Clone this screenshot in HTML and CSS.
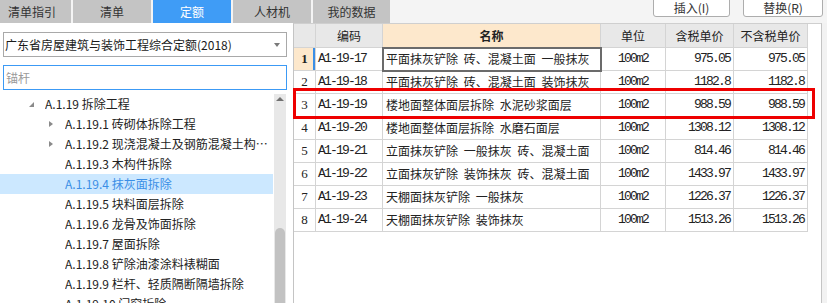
FILE: index.html
```html
<!DOCTYPE html>
<html>

<head>
  <meta charset="utf-8">
  <link rel="stylesheet" href="styles.css">
</head>

<body>

  <div class="topbar">
    <div class="tabs">
      <div class="tab">清单指引</div>
      <div class="tab">清单</div>
      <div class="tab active">定额</div>
      <div class="tab">人材机</div>
      <div class="tab">我的数据</div>
    </div>
    <div class="actions">
      <button class="btn btn-insert">插入(I)</button>
      <button class="btn btn-replace">替换(R)</button>
    </div>
  </div>

  <div class="main">

    <div class="side">
      <div class="select">
        <span>广东省房屋建筑与装饰工程综合定额(2018)</span>
        <span class="caret"></span>
      </div>
      <input class="search" type="text" placeholder="锚杆">

      <div class="tree-wrap">
        <ul class="tree">
          <li class="node lvl0"><span class="arrow open"></span><span class="label">A.1.19 拆除工程</span></li>
          <li class="node lvl1"><span class="arrow closed"></span><span class="label">A.1.19.1 砖砌体拆除工程</span></li>
          <li class="node lvl1"><span class="arrow closed"></span><span class="label">A.1.19.2 现浇混凝土及钢筋混凝土构件拆除</span></li>
          <li class="node lvl1"><span class="arrow"></span><span class="label">A.1.19.3 木构件拆除</span></li>
          <li class="node lvl1 current"><span class="arrow"></span><span class="label">A.1.19.4 抹灰面拆除</span></li>
          <li class="node lvl1"><span class="arrow"></span><span class="label">A.1.19.5 块料面层拆除</span></li>
          <li class="node lvl1"><span class="arrow"></span><span class="label">A.1.19.6 龙骨及饰面拆除</span></li>
          <li class="node lvl1"><span class="arrow"></span><span class="label">A.1.19.7 屋面拆除</span></li>
          <li class="node lvl1"><span class="arrow"></span><span class="label">A.1.19.8 铲除油漆涂料裱糊面</span></li>
          <li class="node lvl1"><span class="arrow"></span><span class="label">A.1.19.9 栏杆、轻质隔断隔墙拆除</span></li>
          <li class="node lvl1"><span class="arrow"></span><span class="label">A.1.19.10 门窗拆除</span></li>
        </ul>
        <div class="scrollbar">
          <div class="scroll-up"></div>
          <div class="thumb"></div>
        </div>
      </div>
    </div>

    <div class="grid-panel">
      <table class="grid">
        <colgroup>
          <col class="c-no">
          <col class="c-code">
          <col class="c-name">
          <col class="c-unit">
          <col class="c-price">
          <col class="c-price2">
        </colgroup>
        <thead>
          <tr>
            <th class="no"></th>
            <th>编码</th>
            <th class="name-head">名称</th>
            <th>单位</th>
            <th>含税单价</th>
            <th>不含税单价</th>
          </tr>
        </thead>
        <tbody>
          <tr class="active-row">
            <td class="no">1</td>
            <td class="code">A1-19-17</td>
            <td class="name selected">平面抹灰铲除 砖、混凝土面 一般抹灰</td>
            <td class="unit">100m2</td>
            <td class="num">975.05</td>
            <td class="num">975.05</td>
          </tr>
          <tr>
            <td class="no">2</td>
            <td class="code">A1-19-18</td>
            <td class="name">平面抹灰铲除 砖、混凝土面 装饰抹灰</td>
            <td class="unit">100m2</td>
            <td class="num">1182.8</td>
            <td class="num">1182.8</td>
          </tr>
          <tr>
            <td class="no">3</td>
            <td class="code">A1-19-19</td>
            <td class="name">楼地面整体面层拆除 水泥砂浆面层</td>
            <td class="unit">100m2</td>
            <td class="num">988.59</td>
            <td class="num">988.59</td>
          </tr>
          <tr>
            <td class="no">4</td>
            <td class="code">A1-19-20</td>
            <td class="name">楼地面整体面层拆除 水磨石面层</td>
            <td class="unit">100m2</td>
            <td class="num">1308.12</td>
            <td class="num">1308.12</td>
          </tr>
          <tr>
            <td class="no">5</td>
            <td class="code">A1-19-21</td>
            <td class="name">立面抹灰铲除 一般抹灰 砖、混凝土面</td>
            <td class="unit">100m2</td>
            <td class="num">814.46</td>
            <td class="num">814.46</td>
          </tr>
          <tr>
            <td class="no">6</td>
            <td class="code">A1-19-22</td>
            <td class="name">立面抹灰铲除 装饰抹灰 砖、混凝土面</td>
            <td class="unit">100m2</td>
            <td class="num">1433.97</td>
            <td class="num">1433.97</td>
          </tr>
          <tr>
            <td class="no">7</td>
            <td class="code">A1-19-23</td>
            <td class="name">天棚面抹灰铲除 一般抹灰</td>
            <td class="unit">100m2</td>
            <td class="num">1226.37</td>
            <td class="num">1226.37</td>
          </tr>
          <tr>
            <td class="no">8</td>
            <td class="code">A1-19-24</td>
            <td class="name">天棚面抹灰铲除 装饰抹灰</td>
            <td class="unit">100m2</td>
            <td class="num">1513.26</td>
            <td class="num">1513.26</td>
          </tr>
        </tbody>
      </table>

      <!-- red mark drawn over row 3 -->
      <div class="mark"></div>
    </div>

  </div>
</body>

</html>
```

FILE: styles.css
```css
body {
  margin: 0;
  width: 827px;
  height: 303px;
  overflow: hidden;
  background-color: #f2f2f2;
  font-family: "Noto Sans CJK SC", "Noto Sans", sans-serif;
  font-size: 12px;
  color: #222;
}

.topbar {
  height: 23px;
  display: flex;
  background-color: #f4f4f4;
  overflow: visible;
}

.tabs {
  display: flex;
  gap: 2px;
  margin-left: -7px;
  background-color: #f4f4f4;
}

.tab {
  width: 78px;
  height: 23px;
  line-height: 23px;
  text-align: center;
  background-color: #c4c4c4;
  color: #333;
}

.tab.active {
  background-color: #3f9cf6;
  color: #fff;
}

.tabs .tab:last-child {
  width: 77px;
}

.actions {
  display: flex;
  gap: 13px;
  margin-left: auto;
  margin-right: 4px;
}

.btn {
  height: 20px;
  margin-top: -3px;
  padding: 2px 0 0 0;
  border: 1px solid #adadad;
  border-radius: 0 0 3px 3px;
  background-color: #fff;
  font-family: "Noto Sans CJK SC", "Noto Sans", sans-serif;
  font-size: 12px;
  line-height: 16px;
  color: #333;
}

.btn-insert {
  width: 77px;
}

.btn-replace {
  width: 80px;
}

.main {
  display: flex;
  height: 280px;
}

.side {
  width: 293px;
  background-color: #fff;
  display: flex;
  flex-direction: column;
}

.select {
  position: relative;
  width: 284px;
  height: 25px;
  margin: 9px 0 0 3px;
  box-sizing: border-box;
  border: 1px solid #a9a9a9;
  padding-left: 1px;
  line-height: 23px;
  color: #1a1a1a;
}

.caret {
  position: absolute;
  right: 6px;
  top: 10px;
  border-left: 3px solid transparent;
  border-right: 3px solid transparent;
  border-top: 4px solid #7a7a7a;
}

.search {
  width: 284px;
  height: 25px;
  margin: 8px 0 0 3px;
  box-sizing: border-box;
  border: 1px solid #3c9af5;
  padding: 0 0 0 2px;
  outline: none;
  font-family: "Noto Sans CJK SC", "Noto Sans", sans-serif;
  font-size: 12px;
}

.search::placeholder {
  color: #9a9a9a;
}

.tree-wrap {
  display: flex;
  width: 286px;
  margin-top: 4px;
  flex: 1;
  overflow: hidden;
}

.tree {
  list-style: none;
  margin: 0;
  padding: 0;
  width: 274px;
}

.node {
  display: flex;
  align-items: center;
  height: 20px;
  line-height: 20px;
  width: 273px;
  box-sizing: border-box;
  white-space: nowrap;
}

.node.lvl0 {
  padding-left: 29px;
}

.node.lvl1 {
  padding-left: 49px;
}

.node .label {
  overflow: hidden;
  text-overflow: ellipsis;
}

.arrow {
  flex: none;
  width: 16px;
  height: 20px;
  position: relative;
}

.arrow.open::before {
  content: "";
  position: absolute;
  left: 0;
  top: 8px;
  border-right: 5px solid #8a8a8a;
  border-top: 5px solid transparent;
}

.arrow.closed::before {
  content: "";
  position: absolute;
  left: 0;
  top: 7px;
  border-left: 4px solid #8a8a8a;
  border-top: 3px solid transparent;
  border-bottom: 3px solid transparent;
}

.node.current {
  background-color: #cce8ff;
  color: #3a8ee6;
}

.scrollbar {
  position: relative;
  width: 12px;
  background-color: #e8e8e8;
}

.scroll-up {
  position: absolute;
  left: 2px;
  top: 3px;
  border-left: 4px solid transparent;
  border-right: 4px solid transparent;
  border-bottom: 4px solid #707070;
}

.thumb {
  position: absolute;
  left: 1px;
  top: 134px;
  width: 10px;
  height: 120px;
  border-radius: 5px;
  background-color: #c2c2c2;
}

.grid-panel {
  position: relative;
  width: 529px;
  box-sizing: border-box;
  border-top: 1px solid #cfcfcf;
  border-left: 1px solid #c4c4c4;
  border-right: 1px solid #c4c4c4;
  background-color: #fff;
}

.grid {
  table-layout: fixed;
  border-collapse: separate;
  border-spacing: 0;
  width: 514px;
}

.c-no { width: 22px; }
.c-code { width: 67px; }
.c-name { width: 218px; }
.c-unit { width: 65px; }
.c-price { width: 68px; }
.c-price2 { width: 74px; }

.grid th,
.grid td {
  border-right: 1px solid #d4d4d4;
  border-bottom: 1px solid #d4d4d4;
  padding: 0;
  white-space: nowrap;
  overflow: hidden;
}

.grid th {
  height: 23px;
  line-height: 23px;
  background-color: #e8e8e8;
  font-weight: normal;
  color: #222;
}

.grid th.name-head {
  background-color: #fde8cc;
  font-weight: bold;
}

.grid td {
  height: 22px;
  line-height: 22px;
}

.grid .no {
  text-align: center;
  font-family: "Liberation Serif", serif;
  font-size: 13px;
  color: #222;
}

.active-row .no {
  background-color: #fde8cc;
  font-weight: bold;
  box-shadow: inset -2px 0 #3a8ee6;
}

.grid .code {
  padding-left: 2px;
  font-family: "Liberation Mono", monospace;
  font-size: 13px;
  letter-spacing: -1.8px;
}

.grid .name {
  padding-left: 3px;
  word-spacing: 3px;
}

.grid .name.selected {
  outline: 2px solid #6b6b6b;
  outline-offset: -1px;
}

.grid .unit {
  text-align: center;
  font-family: "Liberation Mono", monospace;
  font-size: 13px;
  letter-spacing: -1.8px;
}

.grid .num {
  text-align: right;
  padding-right: 3px;
  font-family: "Liberation Mono", monospace;
  font-size: 13px;
  letter-spacing: -1.8px;
}

.mark {
  position: absolute;
  left: -1px;
  top: 64px;
  width: 516px;
  height: 25px;
  border: 3px solid #ee0000;
}
```
